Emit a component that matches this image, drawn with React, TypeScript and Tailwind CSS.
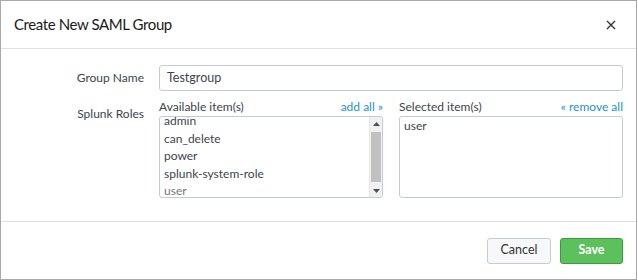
import React from 'react'

const roles = ['admin', 'can_delete', 'power', 'splunk-system-role', 'user']

function Scrollbar() {
  return (
    <div className="w-[13px] shrink-0 flex flex-col bg-[#f1f1f1] border-l border-[#e5e5e5]">
      <div className="h-[13px] flex items-center justify-center">
        <svg width="7" height="4" viewBox="0 0 7 4">
          <path d="M0 4 L3.5 0 L7 4 Z" fill="#505050" />
        </svg>
      </div>
      <div className="flex-1 mx-[1px] my-[2px] bg-[#c1c1c1]" />
      <div className="h-[13px] flex items-center justify-center">
        <svg width="7" height="4" viewBox="0 0 7 4">
          <path d="M0 0 L3.5 4 L7 0 Z" fill="#505050" />
        </svg>
      </div>
    </div>
  )
}

export default function App() {
  return (
    <div
      className="w-[637px] h-[280px] bg-white border border-[#a8a8a8] flex flex-col text-[#3c444d]"
      style={{ fontFamily: 'Lato, "Open Sans", sans-serif' }}
    >
      <div className="h-[48px] flex items-center justify-between pl-[13px] pr-[20px] border-b border-[#dde1e6]">
        <span className="text-[15px] tracking-[-0.4px] text-[#1a1a1a]">Create New SAML Group</span>
        <svg width="10" height="10" viewBox="0 0 10 10">
          <path d="M1 1 L9 9 M9 1 L1 9" stroke="#333" strokeWidth="1.4" />
        </svg>
      </div>

      <div className="flex-1 pt-[16px] pr-[13px] text-[12px]">
        <div className="flex items-center">
          <div className="w-[143px] text-right">Group Name</div>
          <div className="ml-[15px] flex-1 h-[26px] border border-[#c3cbd4] rounded-[3px] flex items-center px-[7px] text-[12.5px]">
            Testgroup
          </div>
        </div>

        <div className="flex mt-[8px]">
          <div className="w-[143px] text-right pt-[6px]">Splunk Roles</div>
          <div className="ml-[15px] flex-1 flex gap-[16px]">
            <div className="w-[224px] flex flex-col">
              <div className="flex justify-between items-end h-[16px] leading-[16px]">
                <span>Available item(s)</span>
                <span className="text-[#1e93c6]">add all »</span>
              </div>
              <div className="mt-[1px] h-[82px] border border-[#c3cbd4] rounded-[3px] flex overflow-hidden">
                <div className="flex-1 overflow-hidden">
                  <div className="-mt-[5px] pl-[4px] leading-[17.5px]">
                    {roles.map((r) => (
                      <div key={r} className={r === 'user' ? 'text-[#777]' : ''}>
                        {r}
                      </div>
                    ))}
                  </div>
                </div>
                <Scrollbar />
              </div>
            </div>
            <div className="flex-1 flex flex-col">
              <div className="flex justify-between items-end h-[16px] leading-[16px]">
                <span>Selected item(s)</span>
                <span className="text-[#1e93c6]">« remove all</span>
              </div>
              <div className="mt-[1px] h-[82px] border border-[#c3cbd4] rounded-[3px] pl-[4px] leading-[17.5px]">
                user
              </div>
            </div>
          </div>
        </div>
      </div>

      <div className="h-[58px] border-t border-[#dde1e6] flex items-center justify-end gap-[9px] pr-[13px]">
        <button className="w-[64px] h-[26px] rounded-[3px] border border-[#c3cbd4] bg-[#f7f8fa] text-[12.5px] text-[#333]">
          Cancel
        </button>
        <button className="w-[63px] h-[26px] rounded-[3px] border border-[#3a9c3a] bg-[#5cc05c] text-[12.5px] font-bold text-white">
          Save
        </button>
      </div>
    </div>
  )
}
